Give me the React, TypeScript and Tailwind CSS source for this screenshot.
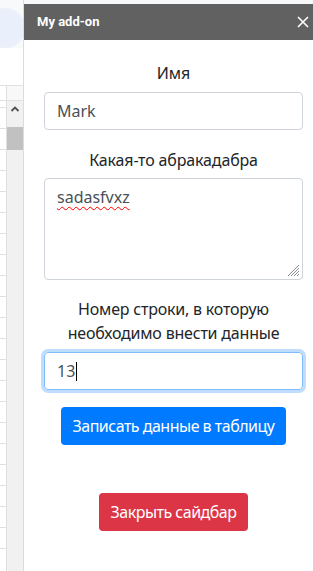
import React from "react";

const rows = Array.from({ length: 21 });

export default function App() {
  return (
    <div className="flex h-[571px] w-[313px] overflow-hidden bg-white" style={{ fontFamily: '"Segoe UI", "Noto Sans", Arial, sans-serif' }}>
      {/* Left spreadsheet strip */}
      <div className="flex w-[24px] shrink-0 flex-col border-r border-[#dadce0]">
        <div className="relative h-[48px] overflow-hidden bg-[#f8f9fa]">
          <div className="absolute left-[-15px] top-[8px] h-[40px] w-[40px] rounded-full bg-[#e9effb]" />
        </div>
        <div className="h-[37px] bg-white" />
        <div className="flex h-[16px] border-y border-[#e0e0e0]">
          <div className="w-[7px] border-r border-[#e0e0e0] bg-white" />
          <div className="flex-1 bg-[#f8f8f8]" />
        </div>
        <div className="flex flex-1">
          <div className="flex w-[7px] flex-col border-r border-[#e0e0e0] bg-white">
            <div className="h-[7px] border-b border-[#e0e0e0]" />
            {rows.map((_, i) => (
              <div key={i} className="h-[21px] border-b border-[#e0e0e0]" />
            ))}
          </div>
          <div className="flex flex-1 flex-col items-center bg-[#f1f1f1]">
            <svg width="10" height="8" viewBox="0 0 10 8" className="mt-[4px]">
              <path d="M1.5 6 L5 2.5 L8.5 6" fill="none" stroke="#505050" strokeWidth="1.8" />
            </svg>
            <div className="mt-[14px] h-[23px] w-full bg-[#c1c1c1]" />
          </div>
        </div>
      </div>

      {/* Sidebar */}
      <div className="flex flex-1 flex-col">
        <div className="h-[4px] bg-[#f8f9fa]" />
        <div className="flex h-[36px] items-center justify-between bg-[#616161] pl-[13px] pr-[4px]">
          <span className="text-[13px] font-bold text-white" style={{ fontFamily: 'Roboto, Arial, sans-serif' }}>My add-on</span>
          <svg width="12" height="12" viewBox="0 0 12 12">
            <path d="M1 1 L11 11 M11 1 L1 11" stroke="#ffffff" strokeWidth="1.6" />
          </svg>
        </div>
        <div className="flex flex-1 flex-col pl-[20px] pr-[10px] pt-[21px] text-[16px] text-[#212529]">
          <div className="mb-[7px] text-center leading-[24px]">Имя</div>
          <div className="flex h-[38px] items-center rounded-[4px] border border-[#ced4da] px-[12px] text-[#495057]">Mark</div>

          <div className="mb-[6px] mt-[18px] text-center leading-[24px] tracking-[-0.15px]">Какая-то абракадабра</div>
          <div className="relative h-[102px] rounded-[4px] border border-[#ced4da] px-[12px] py-[6px] leading-[24px] text-[#495057]">
            <span className="underline decoration-[#ff0000] decoration-wavy decoration-[1px] underline-offset-[3px]">sadasfvxz</span>
            <svg width="12" height="12" viewBox="0 0 12 12" className="absolute bottom-[2px] right-[2px]">
              <path d="M11 3 L3 11 M11 6 L6 11 M11 9 L9 11 M11 0 L0 11" stroke="#8a8a8a" strokeWidth="1" />
            </svg>
          </div>

          <div className="mb-[7px] mt-[17px] text-center leading-[24px] tracking-[-0.2px]">
            Номер строки, в которую
            <br />
            необходимо внести данные
          </div>
          <div className="flex h-[38px] items-center rounded-[4px] border border-[#80bdff] px-[12px] text-[#495057] shadow-[0_0_0_3px_rgba(0,123,255,0.25)]">
            13<span className="ml-[1px] inline-block h-[19px] w-[1px] bg-black" />
          </div>

          <div className="mt-[17px] flex justify-center">
            <div className="flex h-[38px] items-center rounded-[4px] bg-[#007bff] px-[12px] tracking-[-0.5px] text-white">Записать данные в таблицу</div>
          </div>

          <div className="mt-[48px] flex justify-center">
            <div className="flex h-[38px] items-center rounded-[4px] bg-[#dc3545] px-[12px] tracking-[-0.5px] text-white">Закрыть сайдбар</div>
          </div>
        </div>
      </div>
    </div>
  );
}
